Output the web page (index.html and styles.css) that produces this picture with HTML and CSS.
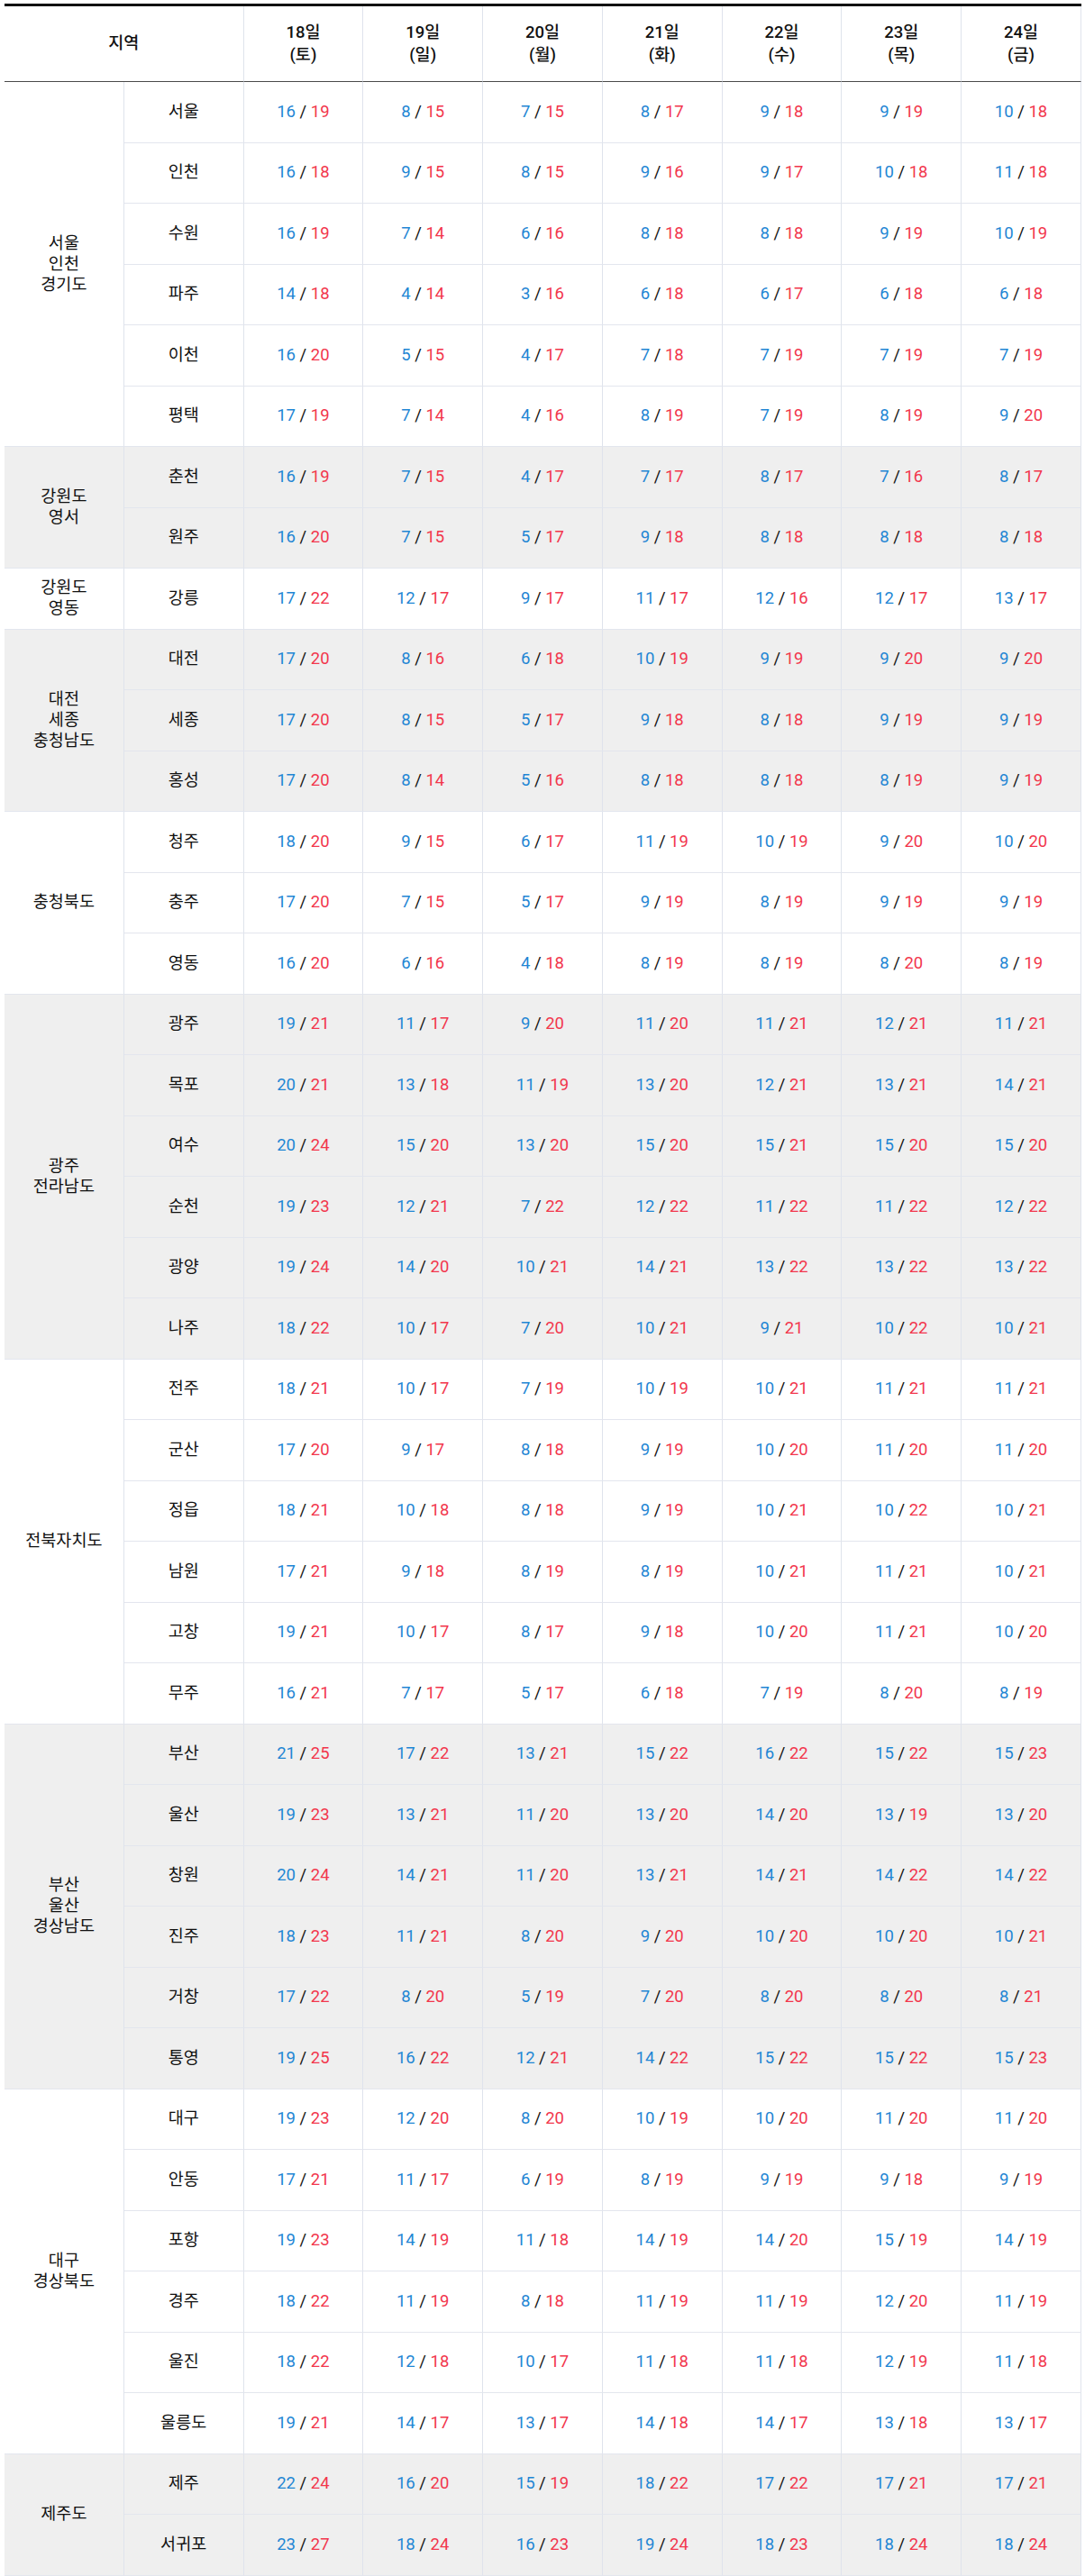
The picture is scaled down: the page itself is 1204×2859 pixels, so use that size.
FILE: index.html
```html
<!DOCTYPE html>
<html lang="ko">
<head>
<meta charset="utf-8">
<title>지역별 기온</title>
<link rel="stylesheet" href="styles.css">
</head>
<body>
<table class="wx">
<colgroup><col><col><col><col><col><col><col><col><col></colgroup>
<thead>
<tr><th colspan="2">지역</th><th>18일<br>(토)</th><th>19일<br>(일)</th><th>20일<br>(월)</th><th>21일<br>(화)</th><th>22일<br>(수)</th><th>23일<br>(목)</th><th>24일<br>(금)</th></tr>
</thead>
<tbody>
<tr><td rowspan="6" class="reg">서울<br>인천<br>경기도</td><td>서울</td><td><span class="lo">16</span> / <span class="hi">19</span></td><td><span class="lo">8</span> / <span class="hi">15</span></td><td><span class="lo">7</span> / <span class="hi">15</span></td><td><span class="lo">8</span> / <span class="hi">17</span></td><td><span class="lo">9</span> / <span class="hi">18</span></td><td><span class="lo">9</span> / <span class="hi">19</span></td><td><span class="lo">10</span> / <span class="hi">18</span></td></tr>
<tr><td>인천</td><td><span class="lo">16</span> / <span class="hi">18</span></td><td><span class="lo">9</span> / <span class="hi">15</span></td><td><span class="lo">8</span> / <span class="hi">15</span></td><td><span class="lo">9</span> / <span class="hi">16</span></td><td><span class="lo">9</span> / <span class="hi">17</span></td><td><span class="lo">10</span> / <span class="hi">18</span></td><td><span class="lo">11</span> / <span class="hi">18</span></td></tr>
<tr><td>수원</td><td><span class="lo">16</span> / <span class="hi">19</span></td><td><span class="lo">7</span> / <span class="hi">14</span></td><td><span class="lo">6</span> / <span class="hi">16</span></td><td><span class="lo">8</span> / <span class="hi">18</span></td><td><span class="lo">8</span> / <span class="hi">18</span></td><td><span class="lo">9</span> / <span class="hi">19</span></td><td><span class="lo">10</span> / <span class="hi">19</span></td></tr>
<tr><td>파주</td><td><span class="lo">14</span> / <span class="hi">18</span></td><td><span class="lo">4</span> / <span class="hi">14</span></td><td><span class="lo">3</span> / <span class="hi">16</span></td><td><span class="lo">6</span> / <span class="hi">18</span></td><td><span class="lo">6</span> / <span class="hi">17</span></td><td><span class="lo">6</span> / <span class="hi">18</span></td><td><span class="lo">6</span> / <span class="hi">18</span></td></tr>
<tr><td>이천</td><td><span class="lo">16</span> / <span class="hi">20</span></td><td><span class="lo">5</span> / <span class="hi">15</span></td><td><span class="lo">4</span> / <span class="hi">17</span></td><td><span class="lo">7</span> / <span class="hi">18</span></td><td><span class="lo">7</span> / <span class="hi">19</span></td><td><span class="lo">7</span> / <span class="hi">19</span></td><td><span class="lo">7</span> / <span class="hi">19</span></td></tr>
<tr><td>평택</td><td><span class="lo">17</span> / <span class="hi">19</span></td><td><span class="lo">7</span> / <span class="hi">14</span></td><td><span class="lo">4</span> / <span class="hi">16</span></td><td><span class="lo">8</span> / <span class="hi">19</span></td><td><span class="lo">7</span> / <span class="hi">19</span></td><td><span class="lo">8</span> / <span class="hi">19</span></td><td><span class="lo">9</span> / <span class="hi">20</span></td></tr>

<tr class="g"><td rowspan="2" class="reg">강원도<br>영서</td><td>춘천</td><td><span class="lo">16</span> / <span class="hi">19</span></td><td><span class="lo">7</span> / <span class="hi">15</span></td><td><span class="lo">4</span> / <span class="hi">17</span></td><td><span class="lo">7</span> / <span class="hi">17</span></td><td><span class="lo">8</span> / <span class="hi">17</span></td><td><span class="lo">7</span> / <span class="hi">16</span></td><td><span class="lo">8</span> / <span class="hi">17</span></td></tr>
<tr class="g"><td>원주</td><td><span class="lo">16</span> / <span class="hi">20</span></td><td><span class="lo">7</span> / <span class="hi">15</span></td><td><span class="lo">5</span> / <span class="hi">17</span></td><td><span class="lo">9</span> / <span class="hi">18</span></td><td><span class="lo">8</span> / <span class="hi">18</span></td><td><span class="lo">8</span> / <span class="hi">18</span></td><td><span class="lo">8</span> / <span class="hi">18</span></td></tr>

<tr><td class="reg">강원도<br>영동</td><td>강릉</td><td><span class="lo">17</span> / <span class="hi">22</span></td><td><span class="lo">12</span> / <span class="hi">17</span></td><td><span class="lo">9</span> / <span class="hi">17</span></td><td><span class="lo">11</span> / <span class="hi">17</span></td><td><span class="lo">12</span> / <span class="hi">16</span></td><td><span class="lo">12</span> / <span class="hi">17</span></td><td><span class="lo">13</span> / <span class="hi">17</span></td></tr>

<tr class="g"><td rowspan="3" class="reg">대전<br>세종<br>충청남도</td><td>대전</td><td><span class="lo">17</span> / <span class="hi">20</span></td><td><span class="lo">8</span> / <span class="hi">16</span></td><td><span class="lo">6</span> / <span class="hi">18</span></td><td><span class="lo">10</span> / <span class="hi">19</span></td><td><span class="lo">9</span> / <span class="hi">19</span></td><td><span class="lo">9</span> / <span class="hi">20</span></td><td><span class="lo">9</span> / <span class="hi">20</span></td></tr>
<tr class="g"><td>세종</td><td><span class="lo">17</span> / <span class="hi">20</span></td><td><span class="lo">8</span> / <span class="hi">15</span></td><td><span class="lo">5</span> / <span class="hi">17</span></td><td><span class="lo">9</span> / <span class="hi">18</span></td><td><span class="lo">8</span> / <span class="hi">18</span></td><td><span class="lo">9</span> / <span class="hi">19</span></td><td><span class="lo">9</span> / <span class="hi">19</span></td></tr>
<tr class="g"><td>홍성</td><td><span class="lo">17</span> / <span class="hi">20</span></td><td><span class="lo">8</span> / <span class="hi">14</span></td><td><span class="lo">5</span> / <span class="hi">16</span></td><td><span class="lo">8</span> / <span class="hi">18</span></td><td><span class="lo">8</span> / <span class="hi">18</span></td><td><span class="lo">8</span> / <span class="hi">19</span></td><td><span class="lo">9</span> / <span class="hi">19</span></td></tr>

<tr><td rowspan="3" class="reg">충청북도</td><td>청주</td><td><span class="lo">18</span> / <span class="hi">20</span></td><td><span class="lo">9</span> / <span class="hi">15</span></td><td><span class="lo">6</span> / <span class="hi">17</span></td><td><span class="lo">11</span> / <span class="hi">19</span></td><td><span class="lo">10</span> / <span class="hi">19</span></td><td><span class="lo">9</span> / <span class="hi">20</span></td><td><span class="lo">10</span> / <span class="hi">20</span></td></tr>
<tr><td>충주</td><td><span class="lo">17</span> / <span class="hi">20</span></td><td><span class="lo">7</span> / <span class="hi">15</span></td><td><span class="lo">5</span> / <span class="hi">17</span></td><td><span class="lo">9</span> / <span class="hi">19</span></td><td><span class="lo">8</span> / <span class="hi">19</span></td><td><span class="lo">9</span> / <span class="hi">19</span></td><td><span class="lo">9</span> / <span class="hi">19</span></td></tr>
<tr><td>영동</td><td><span class="lo">16</span> / <span class="hi">20</span></td><td><span class="lo">6</span> / <span class="hi">16</span></td><td><span class="lo">4</span> / <span class="hi">18</span></td><td><span class="lo">8</span> / <span class="hi">19</span></td><td><span class="lo">8</span> / <span class="hi">19</span></td><td><span class="lo">8</span> / <span class="hi">20</span></td><td><span class="lo">8</span> / <span class="hi">19</span></td></tr>

<tr class="g"><td rowspan="6" class="reg">광주<br>전라남도</td><td>광주</td><td><span class="lo">19</span> / <span class="hi">21</span></td><td><span class="lo">11</span> / <span class="hi">17</span></td><td><span class="lo">9</span> / <span class="hi">20</span></td><td><span class="lo">11</span> / <span class="hi">20</span></td><td><span class="lo">11</span> / <span class="hi">21</span></td><td><span class="lo">12</span> / <span class="hi">21</span></td><td><span class="lo">11</span> / <span class="hi">21</span></td></tr>
<tr class="g"><td>목포</td><td><span class="lo">20</span> / <span class="hi">21</span></td><td><span class="lo">13</span> / <span class="hi">18</span></td><td><span class="lo">11</span> / <span class="hi">19</span></td><td><span class="lo">13</span> / <span class="hi">20</span></td><td><span class="lo">12</span> / <span class="hi">21</span></td><td><span class="lo">13</span> / <span class="hi">21</span></td><td><span class="lo">14</span> / <span class="hi">21</span></td></tr>
<tr class="g"><td>여수</td><td><span class="lo">20</span> / <span class="hi">24</span></td><td><span class="lo">15</span> / <span class="hi">20</span></td><td><span class="lo">13</span> / <span class="hi">20</span></td><td><span class="lo">15</span> / <span class="hi">20</span></td><td><span class="lo">15</span> / <span class="hi">21</span></td><td><span class="lo">15</span> / <span class="hi">20</span></td><td><span class="lo">15</span> / <span class="hi">20</span></td></tr>
<tr class="g"><td>순천</td><td><span class="lo">19</span> / <span class="hi">23</span></td><td><span class="lo">12</span> / <span class="hi">21</span></td><td><span class="lo">7</span> / <span class="hi">22</span></td><td><span class="lo">12</span> / <span class="hi">22</span></td><td><span class="lo">11</span> / <span class="hi">22</span></td><td><span class="lo">11</span> / <span class="hi">22</span></td><td><span class="lo">12</span> / <span class="hi">22</span></td></tr>
<tr class="g"><td>광양</td><td><span class="lo">19</span> / <span class="hi">24</span></td><td><span class="lo">14</span> / <span class="hi">20</span></td><td><span class="lo">10</span> / <span class="hi">21</span></td><td><span class="lo">14</span> / <span class="hi">21</span></td><td><span class="lo">13</span> / <span class="hi">22</span></td><td><span class="lo">13</span> / <span class="hi">22</span></td><td><span class="lo">13</span> / <span class="hi">22</span></td></tr>
<tr class="g"><td>나주</td><td><span class="lo">18</span> / <span class="hi">22</span></td><td><span class="lo">10</span> / <span class="hi">17</span></td><td><span class="lo">7</span> / <span class="hi">20</span></td><td><span class="lo">10</span> / <span class="hi">21</span></td><td><span class="lo">9</span> / <span class="hi">21</span></td><td><span class="lo">10</span> / <span class="hi">22</span></td><td><span class="lo">10</span> / <span class="hi">21</span></td></tr>

<tr><td rowspan="6" class="reg">전북자치도</td><td>전주</td><td><span class="lo">18</span> / <span class="hi">21</span></td><td><span class="lo">10</span> / <span class="hi">17</span></td><td><span class="lo">7</span> / <span class="hi">19</span></td><td><span class="lo">10</span> / <span class="hi">19</span></td><td><span class="lo">10</span> / <span class="hi">21</span></td><td><span class="lo">11</span> / <span class="hi">21</span></td><td><span class="lo">11</span> / <span class="hi">21</span></td></tr>
<tr><td>군산</td><td><span class="lo">17</span> / <span class="hi">20</span></td><td><span class="lo">9</span> / <span class="hi">17</span></td><td><span class="lo">8</span> / <span class="hi">18</span></td><td><span class="lo">9</span> / <span class="hi">19</span></td><td><span class="lo">10</span> / <span class="hi">20</span></td><td><span class="lo">11</span> / <span class="hi">20</span></td><td><span class="lo">11</span> / <span class="hi">20</span></td></tr>
<tr><td>정읍</td><td><span class="lo">18</span> / <span class="hi">21</span></td><td><span class="lo">10</span> / <span class="hi">18</span></td><td><span class="lo">8</span> / <span class="hi">18</span></td><td><span class="lo">9</span> / <span class="hi">19</span></td><td><span class="lo">10</span> / <span class="hi">21</span></td><td><span class="lo">10</span> / <span class="hi">22</span></td><td><span class="lo">10</span> / <span class="hi">21</span></td></tr>
<tr><td>남원</td><td><span class="lo">17</span> / <span class="hi">21</span></td><td><span class="lo">9</span> / <span class="hi">18</span></td><td><span class="lo">8</span> / <span class="hi">19</span></td><td><span class="lo">8</span> / <span class="hi">19</span></td><td><span class="lo">10</span> / <span class="hi">21</span></td><td><span class="lo">11</span> / <span class="hi">21</span></td><td><span class="lo">10</span> / <span class="hi">21</span></td></tr>
<tr><td>고창</td><td><span class="lo">19</span> / <span class="hi">21</span></td><td><span class="lo">10</span> / <span class="hi">17</span></td><td><span class="lo">8</span> / <span class="hi">17</span></td><td><span class="lo">9</span> / <span class="hi">18</span></td><td><span class="lo">10</span> / <span class="hi">20</span></td><td><span class="lo">11</span> / <span class="hi">21</span></td><td><span class="lo">10</span> / <span class="hi">20</span></td></tr>
<tr><td>무주</td><td><span class="lo">16</span> / <span class="hi">21</span></td><td><span class="lo">7</span> / <span class="hi">17</span></td><td><span class="lo">5</span> / <span class="hi">17</span></td><td><span class="lo">6</span> / <span class="hi">18</span></td><td><span class="lo">7</span> / <span class="hi">19</span></td><td><span class="lo">8</span> / <span class="hi">20</span></td><td><span class="lo">8</span> / <span class="hi">19</span></td></tr>

<tr class="g"><td rowspan="6" class="reg">부산<br>울산<br>경상남도</td><td>부산</td><td><span class="lo">21</span> / <span class="hi">25</span></td><td><span class="lo">17</span> / <span class="hi">22</span></td><td><span class="lo">13</span> / <span class="hi">21</span></td><td><span class="lo">15</span> / <span class="hi">22</span></td><td><span class="lo">16</span> / <span class="hi">22</span></td><td><span class="lo">15</span> / <span class="hi">22</span></td><td><span class="lo">15</span> / <span class="hi">23</span></td></tr>
<tr class="g"><td>울산</td><td><span class="lo">19</span> / <span class="hi">23</span></td><td><span class="lo">13</span> / <span class="hi">21</span></td><td><span class="lo">11</span> / <span class="hi">20</span></td><td><span class="lo">13</span> / <span class="hi">20</span></td><td><span class="lo">14</span> / <span class="hi">20</span></td><td><span class="lo">13</span> / <span class="hi">19</span></td><td><span class="lo">13</span> / <span class="hi">20</span></td></tr>
<tr class="g"><td>창원</td><td><span class="lo">20</span> / <span class="hi">24</span></td><td><span class="lo">14</span> / <span class="hi">21</span></td><td><span class="lo">11</span> / <span class="hi">20</span></td><td><span class="lo">13</span> / <span class="hi">21</span></td><td><span class="lo">14</span> / <span class="hi">21</span></td><td><span class="lo">14</span> / <span class="hi">22</span></td><td><span class="lo">14</span> / <span class="hi">22</span></td></tr>
<tr class="g"><td>진주</td><td><span class="lo">18</span> / <span class="hi">23</span></td><td><span class="lo">11</span> / <span class="hi">21</span></td><td><span class="lo">8</span> / <span class="hi">20</span></td><td><span class="lo">9</span> / <span class="hi">20</span></td><td><span class="lo">10</span> / <span class="hi">20</span></td><td><span class="lo">10</span> / <span class="hi">20</span></td><td><span class="lo">10</span> / <span class="hi">21</span></td></tr>
<tr class="g"><td>거창</td><td><span class="lo">17</span> / <span class="hi">22</span></td><td><span class="lo">8</span> / <span class="hi">20</span></td><td><span class="lo">5</span> / <span class="hi">19</span></td><td><span class="lo">7</span> / <span class="hi">20</span></td><td><span class="lo">8</span> / <span class="hi">20</span></td><td><span class="lo">8</span> / <span class="hi">20</span></td><td><span class="lo">8</span> / <span class="hi">21</span></td></tr>
<tr class="g"><td>통영</td><td><span class="lo">19</span> / <span class="hi">25</span></td><td><span class="lo">16</span> / <span class="hi">22</span></td><td><span class="lo">12</span> / <span class="hi">21</span></td><td><span class="lo">14</span> / <span class="hi">22</span></td><td><span class="lo">15</span> / <span class="hi">22</span></td><td><span class="lo">15</span> / <span class="hi">22</span></td><td><span class="lo">15</span> / <span class="hi">23</span></td></tr>

<tr><td rowspan="6" class="reg">대구<br>경상북도</td><td>대구</td><td><span class="lo">19</span> / <span class="hi">23</span></td><td><span class="lo">12</span> / <span class="hi">20</span></td><td><span class="lo">8</span> / <span class="hi">20</span></td><td><span class="lo">10</span> / <span class="hi">19</span></td><td><span class="lo">10</span> / <span class="hi">20</span></td><td><span class="lo">11</span> / <span class="hi">20</span></td><td><span class="lo">11</span> / <span class="hi">20</span></td></tr>
<tr><td>안동</td><td><span class="lo">17</span> / <span class="hi">21</span></td><td><span class="lo">11</span> / <span class="hi">17</span></td><td><span class="lo">6</span> / <span class="hi">19</span></td><td><span class="lo">8</span> / <span class="hi">19</span></td><td><span class="lo">9</span> / <span class="hi">19</span></td><td><span class="lo">9</span> / <span class="hi">18</span></td><td><span class="lo">9</span> / <span class="hi">19</span></td></tr>
<tr><td>포항</td><td><span class="lo">19</span> / <span class="hi">23</span></td><td><span class="lo">14</span> / <span class="hi">19</span></td><td><span class="lo">11</span> / <span class="hi">18</span></td><td><span class="lo">14</span> / <span class="hi">19</span></td><td><span class="lo">14</span> / <span class="hi">20</span></td><td><span class="lo">15</span> / <span class="hi">19</span></td><td><span class="lo">14</span> / <span class="hi">19</span></td></tr>
<tr><td>경주</td><td><span class="lo">18</span> / <span class="hi">22</span></td><td><span class="lo">11</span> / <span class="hi">19</span></td><td><span class="lo">8</span> / <span class="hi">18</span></td><td><span class="lo">11</span> / <span class="hi">19</span></td><td><span class="lo">11</span> / <span class="hi">19</span></td><td><span class="lo">12</span> / <span class="hi">20</span></td><td><span class="lo">11</span> / <span class="hi">19</span></td></tr>
<tr><td>울진</td><td><span class="lo">18</span> / <span class="hi">22</span></td><td><span class="lo">12</span> / <span class="hi">18</span></td><td><span class="lo">10</span> / <span class="hi">17</span></td><td><span class="lo">11</span> / <span class="hi">18</span></td><td><span class="lo">11</span> / <span class="hi">18</span></td><td><span class="lo">12</span> / <span class="hi">19</span></td><td><span class="lo">11</span> / <span class="hi">18</span></td></tr>
<tr><td>울릉도</td><td><span class="lo">19</span> / <span class="hi">21</span></td><td><span class="lo">14</span> / <span class="hi">17</span></td><td><span class="lo">13</span> / <span class="hi">17</span></td><td><span class="lo">14</span> / <span class="hi">18</span></td><td><span class="lo">14</span> / <span class="hi">17</span></td><td><span class="lo">13</span> / <span class="hi">18</span></td><td><span class="lo">13</span> / <span class="hi">17</span></td></tr>

<tr class="g"><td rowspan="2" class="reg">제주도</td><td>제주</td><td><span class="lo">22</span> / <span class="hi">24</span></td><td><span class="lo">16</span> / <span class="hi">20</span></td><td><span class="lo">15</span> / <span class="hi">19</span></td><td><span class="lo">18</span> / <span class="hi">22</span></td><td><span class="lo">17</span> / <span class="hi">22</span></td><td><span class="lo">17</span> / <span class="hi">21</span></td><td><span class="lo">17</span> / <span class="hi">21</span></td></tr>
<tr class="g"><td>서귀포</td><td><span class="lo">23</span> / <span class="hi">27</span></td><td><span class="lo">18</span> / <span class="hi">24</span></td><td><span class="lo">16</span> / <span class="hi">23</span></td><td><span class="lo">19</span> / <span class="hi">24</span></td><td><span class="lo">18</span> / <span class="hi">23</span></td><td><span class="lo">18</span> / <span class="hi">24</span></td><td><span class="lo">18</span> / <span class="hi">24</span></td></tr>
</tbody>
</table>
</body>
</html>
```

FILE: styles.css
```css
html, body {
  margin: 0;
  padding: 0;
  background: #ffffff;
}

body {
  font-family: Roboto, "Noto Sans CJK KR", sans-serif;
  color: #111111;
}

.wx {
  margin: 4px 0 0 5px;
  width: 1195px;
  table-layout: fixed;
  border-collapse: separate;
  border-spacing: 0;
  border-top: 3px solid #111111;
}

.wx th {
  height: 83px;
  padding: 0;
  border-bottom: 1px solid #4a4a4a;
  border-right: 1px solid #dfe3ec;
  font-size: 18.5px;
  font-weight: 500;
  line-height: 25px;
  text-align: center;
  vertical-align: middle;
  color: #111111;
}

.wx tbody tr {
  height: 67.5px;
}

.wx td {
  padding: 0;
  border-right: 1px solid #dfe3ec;
  border-bottom: 1px solid #e3e6ee;
  font-size: 18.5px;
  line-height: 23px;
  text-align: center;
  vertical-align: middle;
  color: #111111;
}

.wx tr.g td {
  background: #efefef;
}

.lo {
  color: #1f86d4;
}

.hi {
  color: #f2364c;
}
```
